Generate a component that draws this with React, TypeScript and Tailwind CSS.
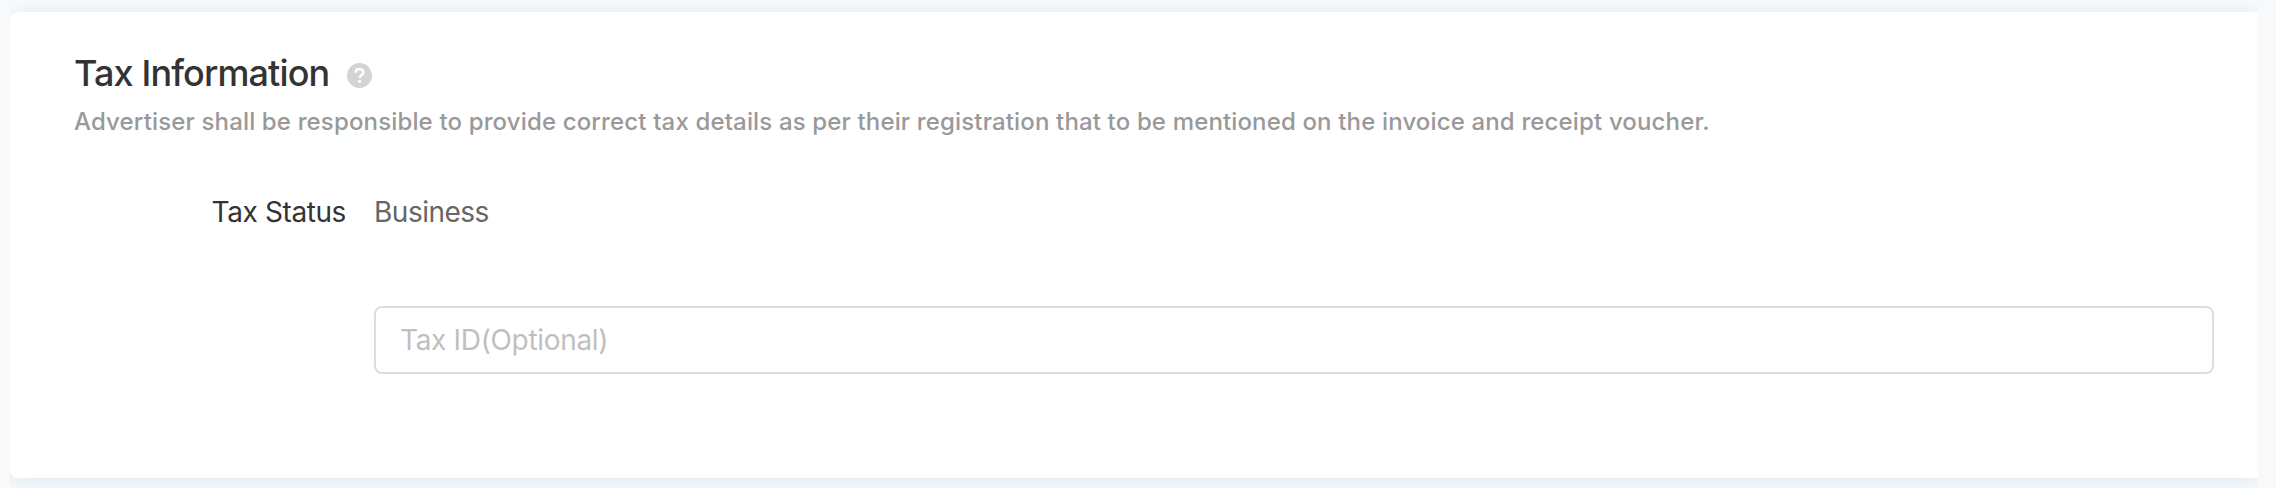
export default function TaxInformation() {
  return (
    <div className="h-[488px] bg-[#f7f9fb] pr-[18px] pl-[10px] font-['Inter',sans-serif]">
      <div className="h-full overflow-hidden bg-[#f7f9fb] pt-3">
        <section className="h-[466px] rounded-l-lg bg-white pt-[38px] pr-[44px] pl-[64px] shadow-[0_2px_16px_0_rgba(20,80,110,0.1)]">
          <div className="flex items-center gap-[18px]">
            <h2 className="text-[36px] leading-[46px] font-medium tracking-[-0.87px] text-[#333]">Tax Information</h2>
            <svg viewBox="0 0 24 24" className="mt-[5px] size-[25px]" fill="none">
              <circle cx="12" cy="12" r="12" fill="#d4d4d4" />
              <path d="M8.2 9.3C8.2 7 9.8 5.7 12 5.7s3.8 1.4 3.8 3.3c0 2.4-3.5 2.6-3.5 5.1" stroke="#fff" strokeWidth="2.3" />
              <circle cx="12.2" cy="17.6" r="1.6" fill="#fff" />
            </svg>
          </div>
          <p className="mt-[10px] text-[24px] leading-8 font-medium tracking-[0.148px] text-[#999]">
            Advertiser shall be responsible to provide correct tax details as per their registration that to be mentioned on the invoice and receipt voucher.
          </p>
          <div className="mt-[54px] flex text-[28px] leading-10">
            <label className="w-[272px] text-right tracking-[-0.4px] text-[#333]">Tax Status</label>
            <span className="ml-[28px] tracking-[-0.5px] text-[#666]">Business</span>
          </div>
          <input
            placeholder="Tax ID(Optional)"
            className="mt-[74px] ml-[300px] block h-[68px] w-[1840px] rounded-lg border-2 border-[#d9dfe3] px-6 text-[28px] tracking-[-0.33px] placeholder:text-[#bfbfbf]"
          />
        </section>
      </div>
    </div>
  )
}
